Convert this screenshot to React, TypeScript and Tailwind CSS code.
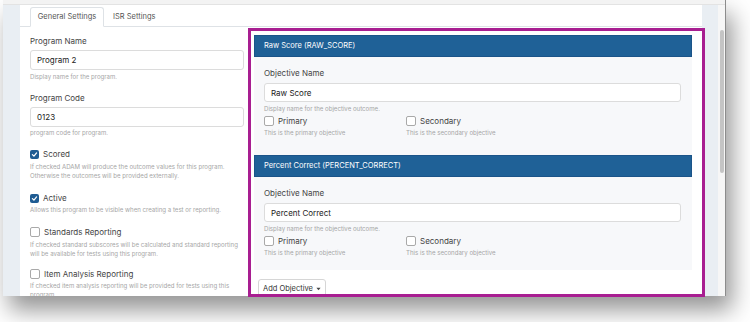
import React from "react";

const F = { fontFamily: "Inter, 'Noto Sans', sans-serif" };

function Check({ checked }: { checked: boolean }) {
  return checked ? (
    <span className="flex h-[9px] w-[9px] shrink-0 items-center justify-center rounded-[2px] bg-[#1f5c93]">
      <svg width="7" height="7" viewBox="0 0 10 10">
        <path d="M2 5.2 L4.2 7.3 L8 2.8" fill="none" stroke="white" strokeWidth="1.8" strokeLinecap="round" strokeLinejoin="round" />
      </svg>
    </span>
  ) : (
    <span className="block h-[10px] w-[10px] shrink-0 rounded-[2px] border border-[#a9a9a9] bg-white" />
  );
}

function Label({ children, className = "" }: { children: React.ReactNode; className?: string }) {
  return <div className={`h-[10px] text-[8px] leading-[10px] text-[#444] ${className}`}>{children}</div>;
}

function Help({ children, className = "" }: { children: React.ReactNode; className?: string }) {
  return <div className={`text-[6.1px] leading-[9px] text-[#a6a6a6] ${className}`}>{children}</div>;
}

function Input({ value, className = "" }: { value: string; className?: string }) {
  return (
    <div className={`flex items-center rounded-[3px] border border-[#dcdcdc] bg-white pl-[6px] text-[8px] text-[#222] ${className}`}>
      {value}
    </div>
  );
}

function CheckRow({ checked, label, className = "" }: { checked: boolean; label: string; className?: string }) {
  return (
    <div className={`flex h-[10px] items-center gap-[4px] ${className}`}>
      <Check checked={checked} />
      <span className="text-[8px] leading-[10px] text-[#444]">{label}</span>
    </div>
  );
}

function Objective({ title, value, bodyClass }: { title: string; value: string; bodyClass: string }) {
  return (
    <div>
      <div className="flex h-[22px] items-center border border-[#1b5489] bg-[#1f6197] pl-[9px] text-[7.5px] text-white">
        {title}
      </div>
      <div className={`bg-[#f7f8fa] pl-[10px] pr-[11px] pt-[11px] ${bodyClass}`}>
        <Label>Objective Name</Label>
        <Input value={value} className="mt-[5px] h-[19px]" />
        <Help className="mt-[1.5px]">Display name for the objective outcome.</Help>
        <div className="mt-[3px] flex">
          <div className="w-[142px]">
            <CheckRow checked={false} label="Primary" />
            <Help className="mt-[2px]">This is the primary objective</Help>
          </div>
          <div>
            <CheckRow checked={false} label="Secondary" />
            <Help className="mt-[2px]">This is the secondary objective</Help>
          </div>
        </div>
      </div>
    </div>
  );
}

export default function App() {
  return (
    <div className="relative h-[322px] w-[750px] overflow-hidden bg-white" style={F}>
      <div className="ml-[3px] flex h-[296px] w-[723px] flex-col border-r border-[#8c8c8c] bg-[#e9eef3] shadow-[6px_14px_22px_rgba(0,0,0,0.42)]">
        <div className="h-[5px] shrink-0 border-b border-[#e3e3e3] bg-[#f3f3f3]" />
        <div className="flex min-h-0 flex-1">
          <div className="w-[17px] shrink-0" />
          <div className="flex w-[682px] shrink-0 flex-col overflow-hidden bg-white">
            <div className="flex h-[22px] shrink-0 items-end border-b border-[#dee2e6] pl-[10px]">
              <div className="-mb-px flex h-[20px] w-[74px] items-center justify-center rounded-t-[3px] border border-b-white border-[#dee2e6] bg-white text-[7.5px] text-[#555]">
                General Settings
              </div>
              <div className="flex h-[19px] items-center px-[9px] text-[7.5px] text-[#555]">ISR Settings</div>
            </div>
            <div className="flex gap-[10px] pl-[10px] pt-[8px]">
              <div className="w-[214px] shrink-0 pt-[1px]">
                <Label>Program Name</Label>
                <Input value="Program 2" className="mt-[4px] h-[20px]" />
                <Help className="mt-[1.5px]">Display name for the program.</Help>
                <Label className="mt-[12px]">Program Code</Label>
                <Input value="0123" className="mt-[4px] h-[20px]" />
                <Help className="mt-[1.5px]">program code for program.</Help>
                <CheckRow checked label="Scored" className="mt-[12px]" />
                <Help className="mt-[3px]">
                  If checked ADAM will produce the outcome values for this program.
                  <br />
                  Otherwise the outcomes will be provided externally.
                </Help>
                <CheckRow checked label="Active" className="mt-[13px]" />
                <Help className="mt-[2px]">Allows this program to be visible when creating a test or reporting.</Help>
                <CheckRow checked={false} label="Standards Reporting" className="mt-[13px]" />
                <Help className="mt-[2.5px]">
                  If checked standard subscores will be calculated and standard reporting
                  <br />
                  will be available for tests using this program.
                </Help>
                <CheckRow checked={false} label="Item Analysis Reporting" className="mt-[11px]" />
                <Help className="mt-[2.5px]">
                  If checked item analysis reporting will be provided for tests using this
                  <br />
                  program.
                </Help>
              </div>
              <div className="w-[438px] shrink-0">
                <Objective title="Raw Score (RAW_SCORE)" value="Raw Score" bodyClass="h-[98px]" />
                <Objective title="Percent Correct (PERCENT_CORRECT)" value="Percent Correct" bodyClass="h-[93px]" />
                <div className="ml-[4px] mt-[9px] flex h-[20px] w-[68px] items-center justify-center gap-[3px] rounded-[3px] border border-[#d6d6d6] bg-white text-[7.5px] text-[#333]">
                  Add Objective
                  <svg width="5" height="4" viewBox="0 0 6 4">
                    <path d="M0.5 0.5 L3 3.5 L5.5 0.5 Z" fill="#444" />
                  </svg>
                </div>
              </div>
            </div>
          </div>
          <div className="w-[16px] shrink-0" />
          <div className="w-[7px] shrink-0 bg-[#f6f6f6] pt-[25px]">
            <div className="ml-[2px] h-[143px] w-[4px] rounded-full bg-[#c4c4c4]" />
          </div>
        </div>
      </div>
      <div className="pointer-events-none absolute left-[248px] top-[28px] h-[269px] w-[457px] border-[3px] border-[#a81e91]" />
    </div>
  );
}
